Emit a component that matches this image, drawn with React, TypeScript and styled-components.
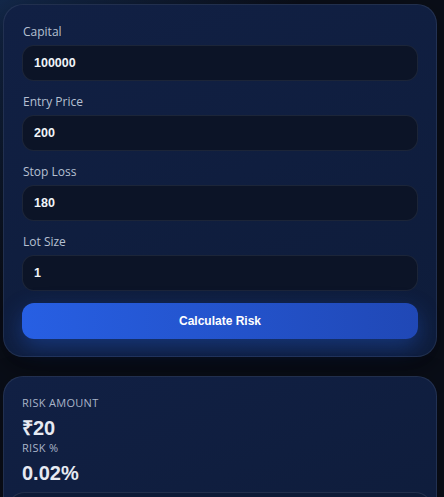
import styled, { createGlobalStyle } from 'styled-components'

const GlobalStyle = createGlobalStyle`
  html, body {
    margin: 0;
    padding: 0;
    background: #0a0e18;
  }
  body {
    min-height: 497px;
    background:
      radial-gradient(circle at 0% 0%, #13284a 0%, rgba(19, 40, 74, 0) 45%),
      #0a0e18;
    font-family: 'Open Sans', 'Noto Sans', sans-serif;
  }
`

const Page = styled.div`
  display: flex;
  flex-direction: column;
  gap: 19px;
  height: 497px;
  overflow: hidden;
  padding: 4px 7px 0 3px;
  box-sizing: border-box;
`

const Card = styled.section`
  flex-shrink: 0;
  background: linear-gradient(160deg, #112044 0%, #0e1c3a 100%);
  border: 1px solid rgba(148, 163, 184, 0.14);
  border-radius: 20px;
  padding: 19px 18px 17px;
  display: flex;
  flex-direction: column;
  box-shadow: 0 10px 30px rgba(0, 0, 0, 0.35);
`

const Field = styled.div`
  display: flex;
  flex-direction: column;
  gap: 5px;
  margin-bottom: 13px;
`

const Label = styled.label`
  font-size: 12px;
  line-height: 16px;
  color: #b6c0d2;
  padding-left: 1px;
`

const Input = styled.input`
  display: block;
  box-sizing: border-box;
  height: 36px;
  width: 100%;
  border-radius: 12px;
  border: 1px solid rgba(148, 163, 184, 0.12);
  background: #0c1427;
  color: #f1f4f9;
  font-family: 'Liberation Sans', Arial, sans-serif;
  font-weight: 700;
  font-size: 12.5px;
  padding: 0 11px;
  outline: none;
`

const Button = styled.button`
  height: 36px;
  border: none;
  border-radius: 12px;
  background: linear-gradient(90deg, #275fe3 0%, #2048b6 100%);
  color: #ffffff;
  font-family: 'Liberation Sans', Arial, sans-serif;
  font-weight: 700;
  font-size: 12px;
  box-shadow: 0 8px 22px rgba(37, 99, 235, 0.35);
  cursor: pointer;
  margin-top: -1px;
`

const ResultCard = styled(Card)`
  padding-top: 18px;
  gap: 0;
  overflow: hidden;
  min-height: 160px;
`

const StatLabel = styled.div`
  font-size: 11px;
  line-height: 16px;
  letter-spacing: 0.3px;
  color: #a9b4c8;
  text-transform: uppercase;
`

const StatValue = styled.div<{ $space: number }>`
  font-family: 'Liberation Sans', Arial, sans-serif;
  font-weight: 700;
  font-size: 20px;
  line-height: 23px;
  color: #e6eaf2;
  margin-top: 6px;
  margin-bottom: ${(p) => p.$space}px;
`

const SubBox = styled.div`
  margin: 0 -15px;
  height: 60px;
  border: 1px solid rgba(148, 163, 184, 0.16);
  border-radius: 18px;
  background: #0d1a36;
`

const fields = [
  { label: 'Capital', value: '100000' },
  { label: 'Entry Price', value: '200' },
  { label: 'Stop Loss', value: '180' },
  { label: 'Lot Size', value: '1' },
]

const App = () => {
  return (
    <>
      <GlobalStyle />
      <Page>
        <Card>
          {fields.map((f) => (
            <Field key={f.label}>
              <Label>{f.label}</Label>
              <Input defaultValue={f.value} />
            </Field>
          ))}
          <Button>Calculate Risk</Button>
        </Card>
        <ResultCard>
          <StatLabel>Risk Amount</StatLabel>
          <StatValue $space={0}>₹20</StatValue>
          <StatLabel>Risk %</StatLabel>
          <StatValue $space={7}>0.02%</StatValue>
          <SubBox />
        </ResultCard>
      </Page>
    </>
  )
}

export default App
